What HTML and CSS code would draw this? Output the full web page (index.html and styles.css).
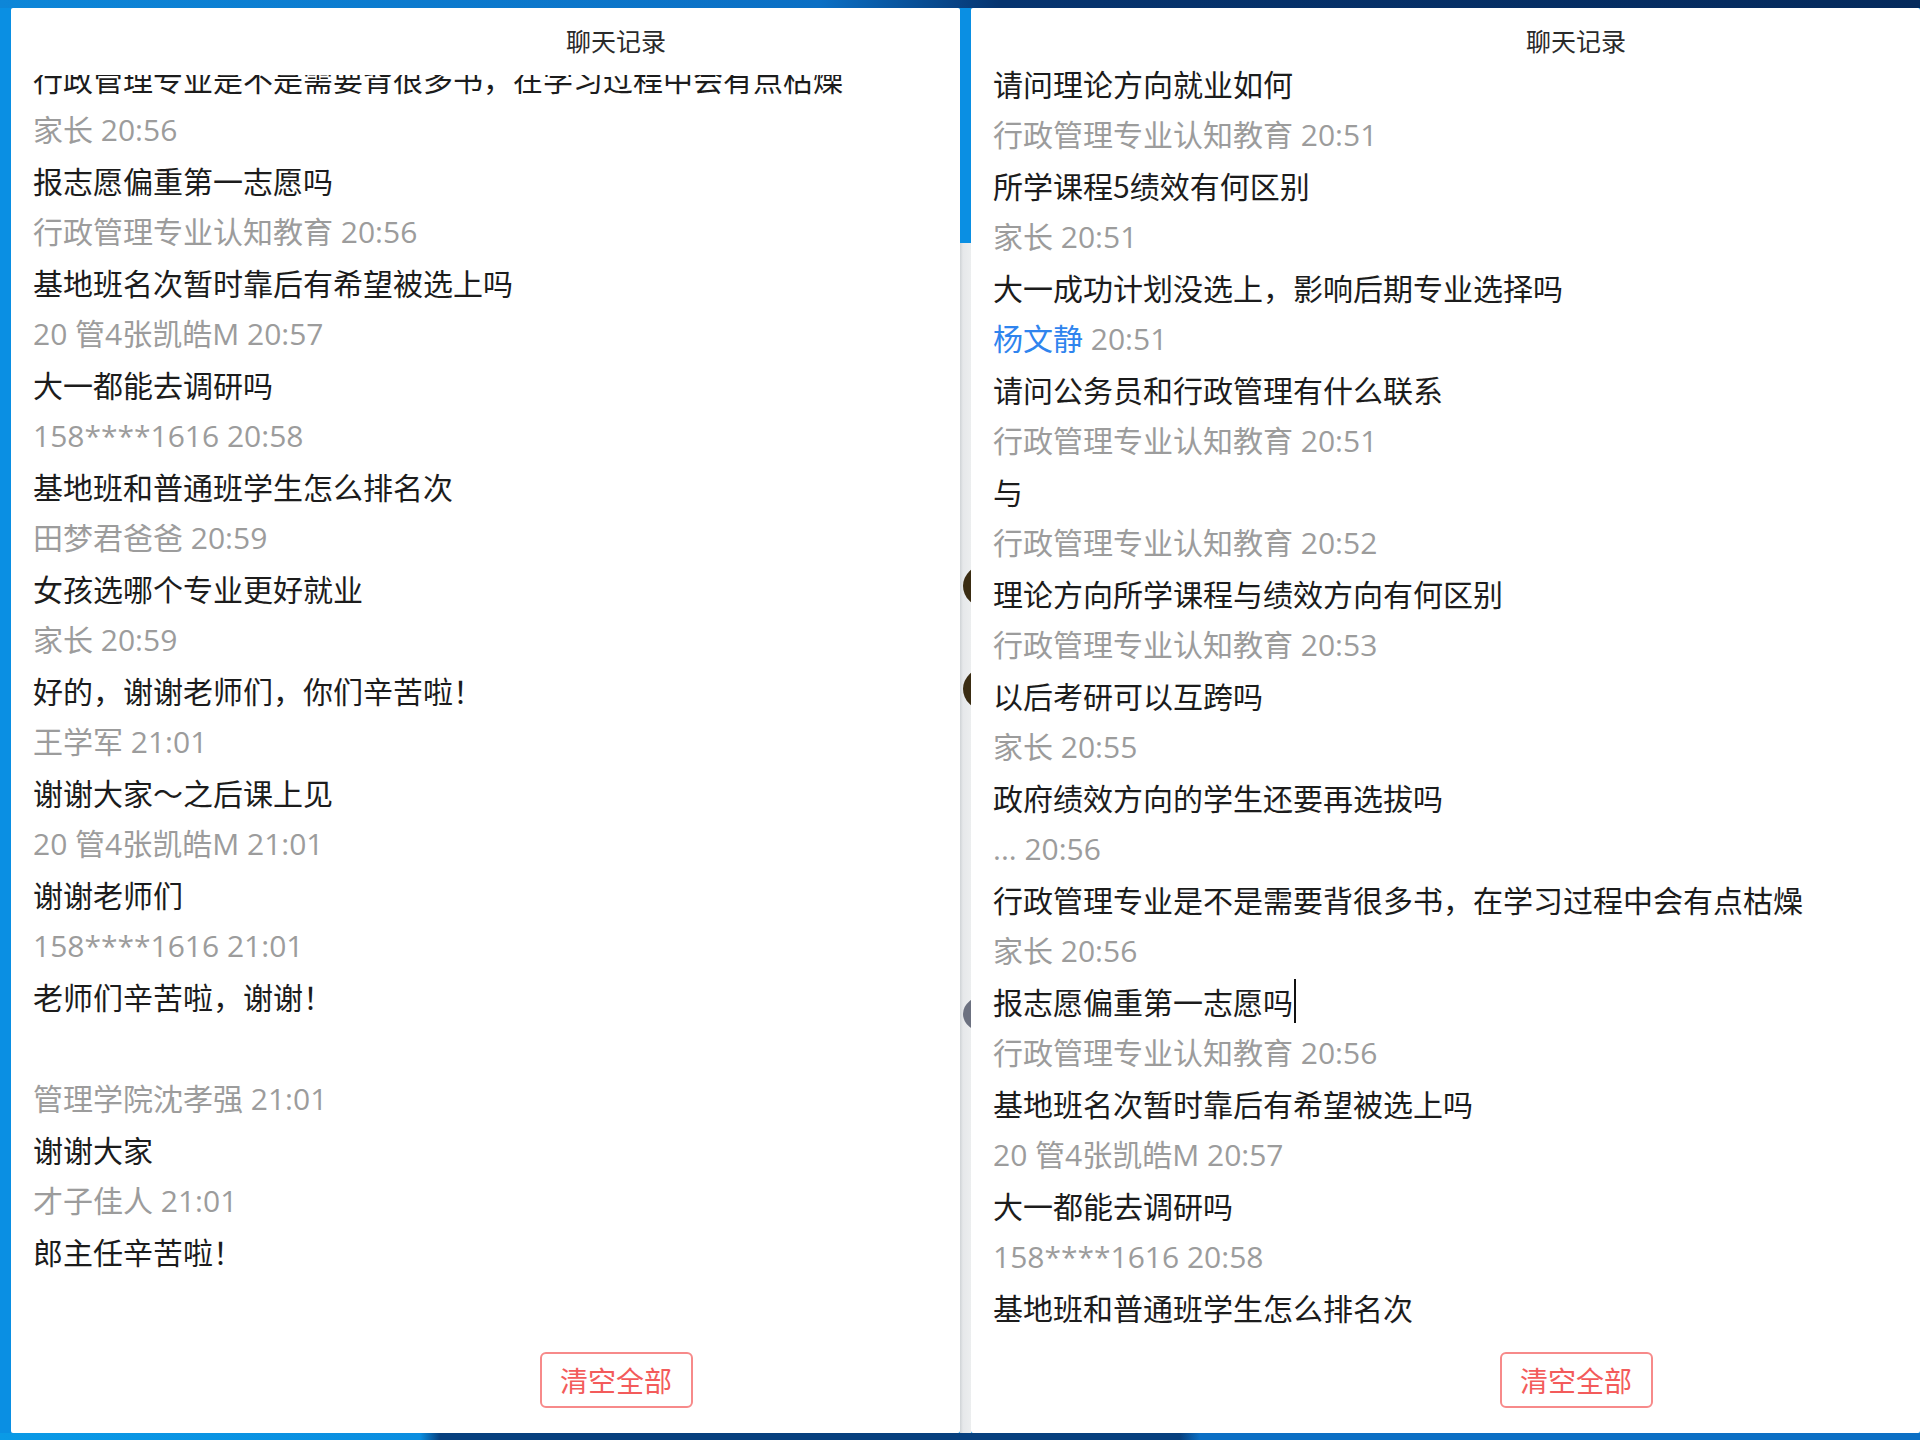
FILE: index.html
```html
<!DOCTYPE html>
<html lang="zh-CN">

<head>
    <meta charset="UTF-8">
    <title>聊天记录</title>
    <link rel="stylesheet" href="styles.css">
</head>

<body>
    <div class="desktop">

        <!-- left window, scrolled down a bit -->
        <div class="window">
            <div class="dialog">
                <div class="dialog-title">聊天记录</div>
                <div class="chat-scroll scrolled">
                    <div class="chat-list">
                        <div class="text">行政管理专业是不是需要背很多书，在学习过程中会有点枯燥</div>
                        <div class="who">家长 20:56</div>
                        <div class="text">报志愿偏重第一志愿吗</div>
                        <div class="who">行政管理专业认知教育 20:56</div>
                        <div class="text">基地班名次暂时靠后有希望被选上吗</div>
                        <div class="who">20 管4张凯皓M 20:57</div>
                        <div class="text">大一都能去调研吗</div>
                        <div class="who">158****1616 20:58</div>
                        <div class="text">基地班和普通班学生怎么排名次</div>
                        <div class="who">田梦君爸爸 20:59</div>
                        <div class="text">女孩选哪个专业更好就业</div>
                        <div class="who">家长 20:59</div>
                        <div class="text">好的，谢谢老师们，你们辛苦啦！</div>
                        <div class="who">王学军 21:01</div>
                        <div class="text">谢谢大家～之后课上见</div>
                        <div class="who">20 管4张凯皓M 21:01</div>
                        <div class="text">谢谢老师们</div>
                        <div class="who">158****1616 21:01</div>
                        <div class="text">老师们辛苦啦，谢谢！</div>
                        <div class="text blank"></div>
                        <div class="who">管理学院沈孝强 21:01</div>
                        <div class="text">谢谢大家</div>
                        <div class="who">才子佳人 21:01</div>
                        <div class="text">郎主任辛苦啦！</div>
                    </div>
                </div>
                <div class="dialog-footer">
                    <button class="clear-btn">清空全部</button>
                </div>
            </div>
        </div>

        <!-- strip of the window behind -->
        <div class="gap">
            <div class="gap-panel">
                <span class="avatar dark a1"></span>
                <span class="avatar dark a2"></span>
                <span class="avatar grey a3"></span>
            </div>
        </div>

        <!-- right window, scrolled further up -->
        <div class="window">
            <div class="dialog">
                <div class="dialog-title">聊天记录</div>
                <div class="chat-scroll">
                    <div class="chat-list">
                        <div class="text">请问理论方向就业如何</div>
                        <div class="who">行政管理专业认知教育 20:51</div>
                        <div class="text">所学课程5绩效有何区别</div>
                        <div class="who">家长 20:51</div>
                        <div class="text">大一成功计划没选上，影响后期专业选择吗</div>
                        <div class="who"><span class="me">杨文静</span> 20:51</div>
                        <div class="text">请问公务员和行政管理有什么联系</div>
                        <div class="who">行政管理专业认知教育 20:51</div>
                        <div class="text">与</div>
                        <div class="who">行政管理专业认知教育 20:52</div>
                        <div class="text">理论方向所学课程与绩效方向有何区别</div>
                        <div class="who">行政管理专业认知教育 20:53</div>
                        <div class="text">以后考研可以互跨吗</div>
                        <div class="who">家长 20:55</div>
                        <div class="text">政府绩效方向的学生还要再选拔吗</div>
                        <div class="who">... 20:56</div>
                        <div class="text">行政管理专业是不是需要背很多书，在学习过程中会有点枯燥</div>
                        <div class="who">家长 20:56</div>
                        <div class="text"><span class="caret">报志愿偏重第一志愿吗</span></div>
                        <div class="who">行政管理专业认知教育 20:56</div>
                        <div class="text">基地班名次暂时靠后有希望被选上吗</div>
                        <div class="who">20 管4张凯皓M 20:57</div>
                        <div class="text">大一都能去调研吗</div>
                        <div class="who">158****1616 20:58</div>
                        <div class="text">基地班和普通班学生怎么排名次</div>
                    </div>
                </div>
                <div class="dialog-footer">
                    <button class="clear-btn">清空全部</button>
                </div>
            </div>
        </div>

    </div>
</body>

</html>
```

FILE: styles.css
```css
html, body {
    margin: 0;
    padding: 0;
}

body {
    width: 1920px;
    height: 1440px;
    overflow: hidden;
    background:
        linear-gradient(to right, #0d86d8 0, #0b6fc4 820px, #06346f 1000px, #052a5c 1920px) top / 100% 8px no-repeat,
        linear-gradient(to right, #0a9ae6 0, #0b8ee0 420px, #07407e 440px, #07407e 1180px, #0b6fc4 1200px) bottom / 100% 7px no-repeat,
        #0a8fe3;
    font-family: "Open Sans", "Noto Sans CJK SC", sans-serif;
}

.desktop {
    display: flex;
    padding: 8px 0 0 11px;
    height: 1425px;
}

.window {
    width: 949px;
    height: 1425px;
    flex-shrink: 0;
    overflow: hidden;
    background-color: white;
    border-radius: 2px;
}

.dialog {
    width: 1210px;
    height: 100%;
    display: flex;
    flex-direction: column;
}

.dialog-title {
    padding-top: 14px;
    line-height: 36px;
    font-size: 25px;
    text-align: center;
    color: #2a2a2a;
    font-family: "Noto Sans CJK SC", sans-serif;
}

.chat-scroll {
    flex: 1;
    overflow: hidden;
    padding: 0 22px;
}

    .chat-scroll.scrolled {
        margin-top: 17px;
    }

        .chat-scroll.scrolled .chat-list {
            margin-top: -22px;
        }

.chat-list .text,
.chat-list .who {
    height: 51px;
    line-height: 51px;
    font-size: 30px;
    white-space: nowrap;
}

.chat-list .text {
    color: #1c1c1c;
    font-family: "Noto Sans CJK SC", sans-serif;
}

.chat-list .who {
    color: #9c9c9c;
}

.who .me {
    color: #2f84ee;
}

.caret {
    border-right: 2px solid #111;
    padding-right: 1px;
}

.dialog-footer {
    padding: 10px 0 25px;
    text-align: center;
}

.clear-btn {
    width: 153px;
    height: 56px;
    padding: 0;
    background-color: white;
    border: 2px solid #f78a8a;
    border-radius: 6px;
    color: #f35b5b;
    font-size: 28px;
    font-family: "Noto Sans CJK SC", sans-serif;
    cursor: pointer;
}

/* sliver of a third window between the two */
.gap {
    width: 11px;
    flex-shrink: 0;
    padding-top: 235px;
}

.gap-panel {
    position: relative;
    height: 1190px;
    background: linear-gradient(to right, #cfd3d6 0, #e6e8ea 3px, #eceeef 100%);
    overflow: hidden;
}

.avatar {
    position: absolute;
    left: 3px;
    width: 44px;
    height: 42px;
    border-radius: 50%;
}

    .avatar.dark {
        background-color: #3a2c12;
    }

    .avatar.grey {
        background-color: #6c7180;
        height: 36px;
    }

.a1 { top: 322px; }
.a2 { top: 425px; }
.a3 { top: 753px; }
```
